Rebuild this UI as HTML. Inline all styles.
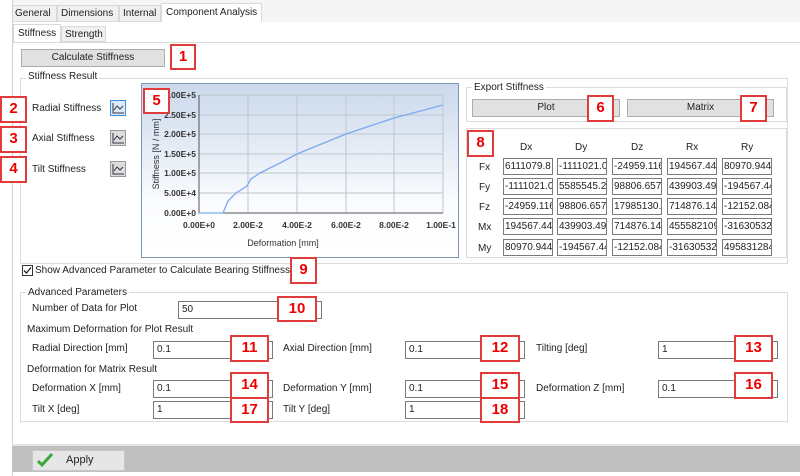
<!DOCTYPE html>
<html><head><meta charset="utf-8"><style>
*{box-sizing:border-box;margin:0;padding:0}
body{width:800px;height:476px;background:#fff;font-family:"Liberation Sans",sans-serif;font-size:10px;color:#222;position:relative;overflow:hidden}
.a{position:absolute}
.t{position:absolute;white-space:nowrap;font-size:10px;color:#222}
.lb{position:absolute;border:2px solid #e23b3b;background:#fff;color:#e00;font-weight:bold;font-size:15px;text-align:center;line-height:22px}
.btn{position:absolute;background:#e1e1e1;border:1px solid #adadad;text-align:center;font-size:10px;color:#222}
.in{position:absolute;background:#fff;border:1px solid #7a7a7a;font-size:10px;padding-left:3px;line-height:16px}
.cell{position:absolute;background:#fff;border:1px solid #7a7a7a;font-size:10px;line-height:15px;overflow:hidden;white-space:nowrap;width:50px;height:17px;padding-left:1px}
.gb{position:absolute;border:1px solid #dcdcdc}
.ico{position:absolute;width:16px;height:16px;background:#ddd;border:1px solid #999}
</style></head><body>
<div class="a" style="left:12px;top:0;width:790px;height:22px;background:#f5f5f5"></div>
<!-- top tabs -->
<div class="a" style="left:12px;top:5px;width:45px;height:17px;background:#f0f0f0;border:1px solid #d9d9d9"></div>
<div class="t" style="left:15px;top:8px">General</div>
<div class="a" style="left:57px;top:5px;width:62px;height:17px;background:#f0f0f0;border:1px solid #d9d9d9"></div>
<div class="t" style="left:61px;top:8px">Dimensions</div>
<div class="a" style="left:119px;top:5px;width:42px;height:17px;background:#f0f0f0;border:1px solid #d9d9d9"></div>
<div class="t" style="left:123px;top:8px">Internal</div>
<div class="a" style="left:161px;top:3px;width:101px;height:20px;background:#fff;border:1px solid #d9d9d9;border-bottom:none"></div>
<div class="t" style="left:166px;top:7px">Component Analysis</div>
<!-- main panel -->
<div class="a" style="left:12px;top:22px;width:790px;height:424px;background:#fff;border-left:1px solid #d0d0d0"></div>
<div class="a" style="left:12px;top:0;width:1px;height:476px;background:#d0d0d0"></div>
<div class="a" style="left:13px;top:24px;width:48px;height:19px;background:#fff;border:1px solid #d9d9d9;border-bottom:none"></div>
<div class="t" style="left:18px;top:28px">Stiffness</div>
<div class="a" style="left:61px;top:26px;width:45px;height:16px;background:#f0f0f0;border:1px solid #d9d9d9"></div>
<div class="t" style="left:65px;top:29px">Strength</div>
<div class="a" style="left:13px;top:42px;width:789px;height:1px;background:#d9d9d9"></div>

<div class="btn" style="left:21px;top:49px;width:144px;height:18px;line-height:16px">Calculate Stiffness</div>
<div class="lb" style="left:170px;top:44px;width:26px;height:26px">1</div>

<div class="gb" style="left:20px;top:78px;width:768px;height:186px"></div>
<div class="t" style="left:26px;top:71px;background:#fff;padding:0 2px">Stiffness Result</div>
<div class="t" style="left:32px;top:103px">Radial Stiffness</div>
<div class="t" style="left:32px;top:133px">Axial Stiffness</div>
<div class="t" style="left:32px;top:164px">Tilt Stiffness</div>
<div class="ico" style="left:110px;top:100px;border-color:#3a8de0;background:#dce9f7"></div>
<div class="ico" style="left:110px;top:130px"></div>
<div class="ico" style="left:110px;top:161px"></div>
<svg class="a" style="left:110px;top:100px" width="16" height="80"><g fill="none" stroke="#334" stroke-width="1"><path d="M3 3V13H14M4 10 7 6 10 9 13 6"/><path d="M3 33V43H14M4 40 7 36 10 39 13 36"/><path d="M3 64V74H14M4 71 7 67 10 70 13 67"/></g></svg>
<div class="lb" style="left:0;top:96px;width:27px;height:27px">2</div>
<div class="lb" style="left:0;top:126px;width:27px;height:27px">3</div>
<div class="lb" style="left:0;top:156px;width:27px;height:27px">4</div>

<!-- chart -->
<div class="a" style="left:141px;top:83px;width:318px;height:175px;border:1px solid #7e97b8;background:linear-gradient(#cbd9ec,#fbfcfe 70%,#fff)"></div>
<svg class="a" style="left:141px;top:83px" width="318" height="175">
<g stroke="#bfc6cf" stroke-width="1" fill="none">
<path d="M58 12H302M58 32H302M58 51H302M58 71H302M58 90H302M58 110H302"/>
<path d="M107 12V130M156 12V130M205 12V130M253 12V130M302 12V130"/>
</g>
<path d="M58 12V130H302" stroke="#555" fill="none"/>
<path d="M58 130H82L87 118 95 110 106 103 110 96 119 90 139 80 156 71 205 51 253 35 302 22" stroke="#7aaaf0" stroke-width="1.3" fill="none"/>
<g font-family="Liberation Sans" font-size="8.5" font-weight="bold" fill="#333" text-anchor="end">
<text x="55" y="15">3.00E+5</text><text x="55" y="35">2.50E+5</text><text x="55" y="54">2.00E+5</text><text x="55" y="74">1.50E+5</text><text x="55" y="93">1.00E+5</text><text x="55" y="113">5.00E+4</text><text x="55" y="133">0.00E+0</text>
</g>
<g font-family="Liberation Sans" font-size="8.5" font-weight="bold" fill="#333" text-anchor="middle">
<text x="58" y="145">0.00E+0</text><text x="107" y="145">2.00E-2</text><text x="156" y="145">4.00E-2</text><text x="205" y="145">6.00E-2</text><text x="253" y="145">8.00E-2</text><text x="300" y="145">1.00E-1</text>
</g>
<text x="142" y="163" font-family="Liberation Sans" font-size="9" fill="#333" text-anchor="middle">Deformation [mm]</text>
<text transform="translate(18 71) rotate(-90)" font-family="Liberation Sans" font-size="9" fill="#333" text-anchor="middle">Stiffness [N / mm]</text>
</svg>
<div class="lb" style="left:143px;top:88px;width:27px;height:26px">5</div>

<!-- export -->
<div class="gb" style="left:466px;top:87px;width:321px;height:35px"></div>
<div class="t" style="left:472px;top:82px;background:#fff;padding:0 2px">Export Stiffness</div>
<div class="btn" style="left:472px;top:99px;width:148px;height:18px;line-height:16px">Plot</div>
<div class="btn" style="left:627px;top:99px;width:147px;height:18px;line-height:16px">Matrix</div>
<div class="lb" style="left:587px;top:95px;width:27px;height:27px">6</div>
<div class="lb" style="left:740px;top:95px;width:27px;height:27px">7</div>

<div class="gb" style="left:466px;top:128px;width:321px;height:130px"></div>
<div class="lb" style="left:467px;top:130px;width:27px;height:27px">8</div>
<div class="t" style="left:520px;top:142px">Dx</div><div class="t" style="left:575px;top:142px">Dy</div><div class="t" style="left:631px;top:142px">Dz</div><div class="t" style="left:686px;top:142px">Rx</div><div class="t" style="left:741px;top:142px">Ry</div>
<div class="t" style="left:479px;top:162px">Fx</div><div class="t" style="left:479px;top:182px">Fy</div><div class="t" style="left:479px;top:202px">Fz</div><div class="t" style="left:478px;top:222px">Mx</div><div class="t" style="left:478px;top:243px">My</div>
<div class="cell" style="left:503px;top:158px">6111079.8</div><div class="cell" style="left:557px;top:158px">-1111021.0</div><div class="cell" style="left:612px;top:158px">-24959.116</div><div class="cell" style="left:667px;top:158px">194567.44</div><div class="cell" style="left:722px;top:158px">80970.9443</div>
<div class="cell" style="left:503px;top:178px">-1111021.0</div><div class="cell" style="left:557px;top:178px">5585545.2</div><div class="cell" style="left:612px;top:178px">98806.657</div><div class="cell" style="left:667px;top:178px">439903.49</div><div class="cell" style="left:722px;top:178px">-194567.44</div>
<div class="cell" style="left:503px;top:198px">-24959.116</div><div class="cell" style="left:557px;top:198px">98806.657</div><div class="cell" style="left:612px;top:198px">17985130.</div><div class="cell" style="left:667px;top:198px">714876.14</div><div class="cell" style="left:722px;top:198px">-12152.084</div>
<div class="cell" style="left:503px;top:218px">194567.44</div><div class="cell" style="left:557px;top:218px">439903.49</div><div class="cell" style="left:612px;top:218px">714876.14</div><div class="cell" style="left:667px;top:218px">455582109</div><div class="cell" style="left:722px;top:218px">-31630532</div>
<div class="cell" style="left:503px;top:239px">80970.944</div><div class="cell" style="left:557px;top:239px">-194567.44</div><div class="cell" style="left:612px;top:239px">-12152.084</div><div class="cell" style="left:667px;top:239px">-31630532</div><div class="cell" style="left:722px;top:239px">495831284</div>

<!-- checkbox -->
<div class="a" style="left:22px;top:265px;width:11px;height:11px;border:1px solid #333;background:#fff"></div>
<svg class="a" style="left:22px;top:265px" width="11" height="11"><path d="M2 5.5 4.5 8 9 2.5" stroke="#222" stroke-width="1.3" fill="none"/></svg>
<div class="t" style="left:35px;top:265px">Show Advanced Parameter to Calculate Bearing Stiffness</div>
<div class="lb" style="left:290px;top:257px;width:27px;height:27px">9</div>

<!-- advanced -->
<div class="gb" style="left:20px;top:292px;width:768px;height:130px"></div>
<div class="t" style="left:26px;top:287px;background:#fff;padding:0 2px">Advanced Parameters</div>
<div class="t" style="left:32px;top:303px">Number of Data for Plot</div>
<div class="in" style="left:178px;top:301px;width:144px;height:18px">50</div>
<div class="lb" style="left:277px;top:296px;width:40px;height:26px">10</div>
<div class="t" style="left:27px;top:324px">Maximum Deformation for Plot Result</div>
<div class="t" style="left:32px;top:343px">Radial Direction [mm]</div>
<div class="in" style="left:153px;top:341px;width:120px;height:18px">0.1</div>
<div class="lb" style="left:230px;top:335px;width:39px;height:27px">11</div>
<div class="t" style="left:283px;top:343px">Axial Direction [mm]</div>
<div class="in" style="left:405px;top:341px;width:120px;height:18px">0.1</div>
<div class="lb" style="left:480px;top:335px;width:40px;height:27px">12</div>
<div class="t" style="left:536px;top:343px">Tilting [deg]</div>
<div class="in" style="left:658px;top:341px;width:120px;height:18px">1</div>
<div class="lb" style="left:734px;top:335px;width:39px;height:27px">13</div>
<div class="t" style="left:27px;top:364px">Deformation for Matrix Result</div>
<div class="t" style="left:32px;top:383px">Deformation X [mm]</div>
<div class="in" style="left:153px;top:380px;width:120px;height:18px">0.1</div>
<div class="lb" style="left:230px;top:372px;width:39px;height:27px">14</div>
<div class="t" style="left:283px;top:383px">Deformation Y [mm]</div>
<div class="in" style="left:405px;top:380px;width:120px;height:18px">0.1</div>
<div class="lb" style="left:480px;top:372px;width:40px;height:27px">15</div>
<div class="t" style="left:536px;top:383px">Deformation Z [mm]</div>
<div class="in" style="left:658px;top:380px;width:120px;height:18px">0.1</div>
<div class="lb" style="left:734px;top:372px;width:39px;height:27px">16</div>
<div class="t" style="left:32px;top:404px">Tilt X [deg]</div>
<div class="in" style="left:153px;top:401px;width:120px;height:18px">1</div>
<div class="lb" style="left:230px;top:397px;width:39px;height:26px">17</div>
<div class="t" style="left:283px;top:404px">Tilt Y [deg]</div>
<div class="in" style="left:405px;top:401px;width:120px;height:18px">1</div>
<div class="lb" style="left:480px;top:397px;width:40px;height:26px">18</div>

<!-- bottom bar -->
<div class="a" style="left:12px;top:444px;width:790px;height:2px;background:#e4e4e4"></div>
<div class="a" style="left:12px;top:446px;width:790px;height:26px;background:#bfbfbf"></div>
<div class="a" style="left:32px;top:450px;width:93px;height:21px;background:#e6e6e6;border:1px solid #c8c8c8"></div>
<svg class="a" style="left:36px;top:452px" width="18" height="16"><path d="M2 9 6 13 16 2" stroke="#3aa53a" stroke-width="3" fill="none"/></svg>
<div class="t" style="left:66px;top:454px;font-size:11px">Apply</div>
</body></html>
